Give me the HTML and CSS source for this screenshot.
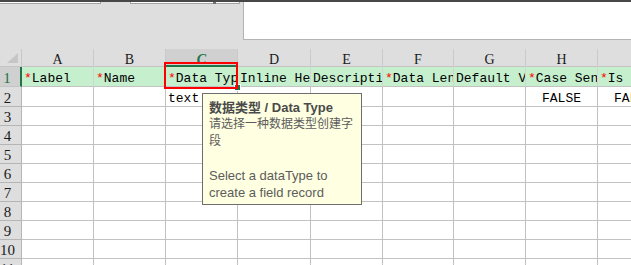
FILE: index.html
```html
<!DOCTYPE html>
<html>
<head>
<meta charset="utf-8">
<link rel="stylesheet" href="styles.css">
</head>
<body>
<div class="app">
  <div class="topbar"></div>
  <div class="toolbar">
    <div class="namebox"></div>
    <div class="fxbox"><span class="fxmark"></span></div>
    <div class="formula"></div>
  </div>
  <div class="sheet">
    <div class="grid">
      <div class="corner"><span class="tri"></span></div>
      <div class="ch">A</div><div class="ch">B</div><div class="ch active">C</div><div class="ch">D</div><div class="ch">E</div><div class="ch">F</div><div class="ch">G</div><div class="ch">H</div><div class="ch">I</div>

      <div class="rh active r1">1</div>
      <div class="c g r1"><span class="req">*</span>Label</div>
      <div class="c g r1"><span class="req">*</span>Name</div>
      <div class="c g r1"><span class="req">*</span>Data Type</div>
      <div class="c g r1">Inline Help</div>
      <div class="c g r1">Description</div>
      <div class="c g r1"><span class="req">*</span>Data Length</div>
      <div class="c g r1">Default Value</div>
      <div class="c g r1"><span class="req">*</span>Case Sensitive</div>
      <div class="c g r1"><span class="req">*</span>Is Unique</div>

      <div class="rh r2">2</div>
      <div class="c r2"></div><div class="c r2"></div><div class="c r2">text</div><div class="c r2"></div><div class="c r2"></div><div class="c r2"></div><div class="c r2"></div><div class="c r2 ctr">FALSE</div><div class="c r2 ctr">FALSE</div>

      <div class="rh">3</div><div class="c"></div><div class="c"></div><div class="c"></div><div class="c"></div><div class="c"></div><div class="c"></div><div class="c"></div><div class="c"></div><div class="c"></div>
      <div class="rh">4</div><div class="c"></div><div class="c"></div><div class="c"></div><div class="c"></div><div class="c"></div><div class="c"></div><div class="c"></div><div class="c"></div><div class="c"></div>
      <div class="rh">5</div><div class="c"></div><div class="c"></div><div class="c"></div><div class="c"></div><div class="c"></div><div class="c"></div><div class="c"></div><div class="c"></div><div class="c"></div>
      <div class="rh">6</div><div class="c"></div><div class="c"></div><div class="c"></div><div class="c"></div><div class="c"></div><div class="c"></div><div class="c"></div><div class="c"></div><div class="c"></div>
      <div class="rh">7</div><div class="c"></div><div class="c"></div><div class="c"></div><div class="c"></div><div class="c"></div><div class="c"></div><div class="c"></div><div class="c"></div><div class="c"></div>
      <div class="rh">8</div><div class="c"></div><div class="c"></div><div class="c"></div><div class="c"></div><div class="c"></div><div class="c"></div><div class="c"></div><div class="c"></div><div class="c"></div>
      <div class="rh">9</div><div class="c"></div><div class="c"></div><div class="c"></div><div class="c"></div><div class="c"></div><div class="c"></div><div class="c"></div><div class="c"></div><div class="c"></div>
      <div class="rh">10</div><div class="c"></div><div class="c"></div><div class="c"></div><div class="c"></div><div class="c"></div><div class="c"></div><div class="c"></div><div class="c"></div><div class="c"></div>
      <div class="rh">11</div><div class="c"></div><div class="c"></div><div class="c"></div><div class="c"></div><div class="c"></div><div class="c"></div><div class="c"></div><div class="c"></div><div class="c"></div>
    </div>
    <div class="handle"></div>
    <div class="annot"></div>
    <div class="tip">
      <div class="tip-title">数据类型 / Data Type</div>
      <div class="tip-line">请选择一种数据类型创建字段</div>
      <div class="tip-gap"></div>
      <div class="tip-line en">Select a dataType to<br>create a field record</div>
    </div>
  </div>
</div>
</body>
</html>
```
FILE: styles.css
```css
html, body {
  margin: 0;
  padding: 0;
  background: #ffffff;
  overflow: hidden;
}
.app {
  width: 631px;
  height: 265px;
  overflow: hidden;
  background: #dedede;
}
.topbar {
  height: 2px;
  background: #474747;
}
.toolbar {
  height: 47px;
  display: flex;
  align-items: flex-start;
  background: #dedede;
}
.namebox {
  width: 100px;
  height: 1px;
  box-sizing: content-box;
  background: #ffffff;
  border-bottom: 1px solid #a3a3a3;
  border-right: 1px solid #a3a3a3;
  margin-right: 29px;
}
.fxbox {
  width: 108px;
  height: 1px;
  background: #ffffff;
  border: 1px solid #a3a3a3;
  border-top: none;
  display: flex;
  justify-content: flex-end;
}
.fxmark {
  width: 3px;
  height: 2px;
  background: #707070;
  margin-right: 23px;
}
.formula {
  flex: 1;
  margin-left: 3px;
  height: 37px;
  background: #ffffff;
  border-left: 1px solid #b3b3b3;
  border-bottom: 1px solid #b3b3b3;
}
.sheet {
  position: relative;
  height: 216px;
  overflow: hidden;
}
.grid {
  display: grid;
  grid-template-columns: 22px 72px 72px 72px 73px 72px 71px 72px 72px 72px;
  grid-template-rows: 18px 20px 20px repeat(9, 19px);
  width: 670px;
  background: #ffffff;
}
.grid > div {
  box-sizing: border-box;
  overflow: hidden;
  white-space: nowrap;
}
.corner {
  background: #dedede;
  border-right: 1px solid #c9c9c9;
  border-bottom: 1px solid #c4c4c4;
  position: relative;
}
.tri {
  position: absolute;
  left: 7px;
  top: 4px;
  width: 0;
  height: 0;
  border-left: 11px solid transparent;
  border-bottom: 10px solid #c6c6c6;
}
.ch {
  background: #dedede;
  border-right: 1px solid #cacaca;
  border-bottom: 1px solid #c4c4c4;
  font-family: "Liberation Serif", serif;
  font-size: 14px;
  color: #1a1a1a;
  text-align: center;
  line-height: 14px;
  padding-top: 4px;
}
.ch.active {
  background: #d0d0d0;
  color: #217346;
  font-style: italic;
  font-weight: bold;
  border-bottom: 2px solid #217346;
}
.rh {
  background: #dedede;
  border-right: 1px solid #b5b5b5;
  border-bottom: 1px solid #b5b5b5;
  font-family: "Liberation Serif", serif;
  font-size: 15px;
  color: #1a1a1a;
  padding-right: 6px;
  display: flex;
  align-items: flex-end;
  justify-content: center;
  line-height: 14px;
  padding-bottom: 1px;
}
.rh.active {
  background: #d0d0d0;
  color: #217346;
  border-right: 2px solid #217346;
  border-bottom: 1px solid #c4c4c4;
}
.c {
  border-right: 1px solid #c2c2c2;
  border-bottom: 1px solid #c2c2c2;
  font-family: "Liberation Mono", monospace;
  font-size: 13px;
  color: #000000;
  padding-left: 2px;
  display: flex;
  align-items: flex-end;
  line-height: 13px;
  padding-bottom: 1px;
}
.c.g {
  background: #c6efce;
  border-right-color: #d4d4d4;
  border-bottom-color: #c2c2c2;
}
.c.ctr {
  justify-content: center;
  padding-left: 0;
}
.req {
  color: #ff0000;
}
.handle {
  position: absolute;
  left: 234px;
  top: 35px;
  width: 5px;
  height: 5px;
  background: #217346;
  border: 1px solid #ffffff;
}
.annot {
  position: absolute;
  left: 164px;
  top: 13px;
  width: 74px;
  height: 27px;
  box-sizing: border-box;
  border: 2px solid #ff0000;
}
.tip {
  position: absolute;
  left: 202px;
  top: 44px;
  width: 160px;
  height: 112px;
  box-sizing: border-box;
  background: #ffffe1;
  border: 1px solid #6e6e6e;
  padding: 5px 4px 0 6px;
  font-family: "Liberation Sans", "Noto Sans CJK SC", sans-serif;
  font-size: 12px;
  line-height: 17px;
  color: #5c5c5c;
}
.tip-title {
  font-weight: bold;
  font-size: 13px;
  color: #4a4a4a;
}
.tip-line.en {
  font-size: 13px;
}
.tip-gap {
  height: 17px;
}
```
